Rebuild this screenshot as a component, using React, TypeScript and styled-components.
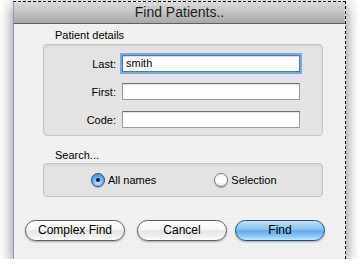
import styled, { createGlobalStyle } from "styled-components";

const GlobalStyle = createGlobalStyle`
  body {
    margin: 0;
    background: #fff;
    font-family: "Liberation Sans", Arial, sans-serif;
  }
`;

const Page = styled.div`
  padding: 1px 0 0 13px;
`;

const Window = styled.div`
  box-sizing: border-box;
  width: 333px;
  height: 258px;
  display: flex;
  flex-direction: column;
  background: #ececec;
  border-top: 1px dashed #000;
  border-right: 1px dashed #000;
  border-left: 1px solid #8f9cb8;
  box-shadow: 0 4px 14px rgba(0, 0, 0, 0.5);
`;

const TitleBar = styled.div`
  height: 21px;
  line-height: 21px;
  text-align: center;
  font-size: 14px;
  color: #1e1e1e;
  background: linear-gradient(#dcdcdc, #a8a8a8);
  border-bottom: 1px solid #5e5e5e;
`;

const Content = styled.div`
  flex: 1;
  padding: 5px 0 0 0;
  display: flex;
  flex-direction: column;
  background-color: #ededed;
  background-image: linear-gradient(rgba(255, 255, 255, 0.35) 1px, transparent 1px);
  background-size: 100% 2px;
`;

const GroupLabel = styled.div<{ $gap: number }>`
  font-size: 11px;
  line-height: 13px;
  margin: 0 0 ${(p) => p.$gap}px 41px;
`;

const GroupBox = styled.div`
  box-sizing: border-box;
  width: 280px;
  margin-left: 29px;
  background: #e3e3e3;
  border: 1px solid #c6c6c6;
  border-radius: 4px;
  box-shadow: inset 0 1px 2px rgba(0, 0, 0, 0.08);
`;

const FieldGrid = styled.div`
  display: grid;
  grid-template-columns: 72px 178px;
  column-gap: 6px;
  row-gap: 11px;
  padding: 10px 0 7px 0;
  align-items: center;
`;

const FieldLabel = styled.label`
  font-size: 11px;
  text-align: right;
`;

const TextField = styled.div<{ $focused?: boolean }>`
  box-sizing: border-box;
  height: 17px;
  padding: 0 3px;
  font-size: 11px;
  line-height: 15px;
  background: #fff;
  border: 1px solid #9c9c9c;
  border-top-color: #707070;
  box-shadow: ${(p) =>
    p.$focused
      ? "0 0 0 2px #7ea8da, inset 0 1px 1px rgba(0,0,0,0.15)"
      : "inset 0 1px 1px rgba(0,0,0,0.12)"};
  border-color: ${(p) => (p.$focused ? "#4f7bb5" : undefined)};
`;

const Spacer = styled.div<{ $h: number }>`
  height: ${(p) => p.$h}px;
`;

const RadioRow = styled.div`
  height: 32px;
  display: flex;
  align-items: center;
  padding-left: 47px;
  gap: 58px;
`;

const RadioOption = styled.div`
  display: flex;
  align-items: center;
  gap: 3px;
  font-size: 11px;
`;

const RadioDot = styled.span<{ $on?: boolean }>`
  box-sizing: border-box;
  width: 14px;
  height: 14px;
  border-radius: 50%;
  display: flex;
  align-items: center;
  justify-content: center;
  border: 1px solid ${(p) => (p.$on ? "#2e4f7f" : "#7a7a7a")};
  background: ${(p) =>
    p.$on
      ? "radial-gradient(circle at 50% 75%, #c4e6ff 0%, #6aaeea 55%, #3c7cc4 100%)"
      : "linear-gradient(#f4f4f4, #ffffff 60%, #e6e6e6)"};
  box-shadow: 0 1px 1px rgba(0, 0, 0, 0.25);

  &::after {
    content: "";
    display: ${(p) => (p.$on ? "block" : "none")};
    width: 4px;
    height: 4px;
    border-radius: 50%;
    background: #0f1c2e;
  }
`;

const ButtonRow = styled.div`
  display: flex;
  margin: 23px 0 0 11px;
`;

const Button = styled.button<{ $w: number; $gap: number; $primary?: boolean }>`
  box-sizing: border-box;
  width: ${(p) => p.$w}px;
  height: 21px;
  margin-left: ${(p) => p.$gap}px;
  padding: 0 0 1px 0;
  font-family: inherit;
  font-size: 12px;
  color: #000;
  border-radius: 11px;
  border: 1px solid ${(p) => (p.$primary ? "#2f4c78" : "#606060")};
  background: ${(p) =>
    p.$primary
      ? "linear-gradient(#c3e1fa 0%, #86c0f1 45%, #62a9ec 52%, #8cc8f6 80%, #c2ecff 100%)"
      : "linear-gradient(#ffffff 0%, #f6f6f6 45%, #e6e6e6 52%, #f0f0f0 80%, #ffffff 100%)"};
  box-shadow: 0 1px 2px rgba(0, 0, 0, 0.3);
`;

export default function App() {
  return (
    <Page>
      <GlobalStyle />
      <Window>
        <TitleBar>Find Patients..</TitleBar>
        <Content>
          <GroupLabel $gap={2}>Patient details</GroupLabel>
          <GroupBox>
            <FieldGrid>
              <FieldLabel>Last:</FieldLabel>
              <TextField $focused>smith</TextField>
              <FieldLabel>First:</FieldLabel>
              <TextField />
              <FieldLabel>Code:</FieldLabel>
              <TextField />
            </FieldGrid>
          </GroupBox>
          <Spacer $h={13} />
          <GroupLabel $gap={1}>Search...</GroupLabel>
          <GroupBox>
            <RadioRow>
              <RadioOption>
                <RadioDot $on />
                All names
              </RadioOption>
              <RadioOption>
                <RadioDot />
                Selection
              </RadioOption>
            </RadioRow>
          </GroupBox>
          <ButtonRow>
            <Button $w={100} $gap={0}>Complex Find</Button>
            <Button $w={90} $gap={12}>Cancel</Button>
            <Button $w={90} $gap={8} $primary>Find</Button>
          </ButtonRow>
        </Content>
      </Window>
    </Page>
  );
}
